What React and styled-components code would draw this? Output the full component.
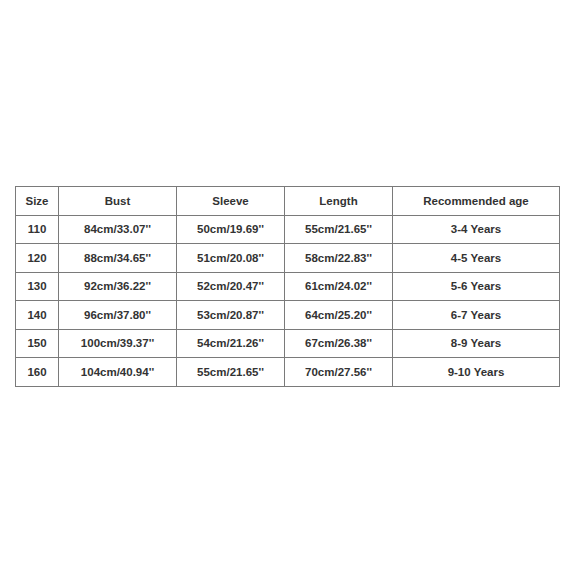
import React from "react";
import styled, { createGlobalStyle } from "styled-components";

const Global = createGlobalStyle`
  html, body { margin: 0; padding: 0; background: #fff; }
  body { font-family: "Liberation Sans", Arial, sans-serif; }
`;

const Page = styled.div`
  width: 573px;
  height: 573px;
  box-sizing: border-box;
  padding: 186px 0 0 15px;
  background: #fff;
`;

const Table = styled.table`
  border-collapse: collapse;
  table-layout: fixed;
  width: 544px;
  color: #333;
  font-size: 11.5px;
  font-weight: bold;
`;

const Cell = styled.td`
  border: 1px solid #7a7a7a;
  height: 27.5px;
  padding: 0;
  text-align: center;
  vertical-align: middle;
  white-space: nowrap;
`;

const cols = [43, 118, 108, 108, 167];
const header = ["Size", "Bust", "Sleeve", "Length", "Recommended age"];
const rows = [
  ["110", "84cm/33.07''", "50cm/19.69''", "55cm/21.65''", "3-4 Years"],
  ["120", "88cm/34.65''", "51cm/20.08''", "58cm/22.83''", "4-5 Years"],
  ["130", "92cm/36.22''", "52cm/20.47''", "61cm/24.02''", "5-6 Years"],
  ["140", "96cm/37.80''", "53cm/20.87''", "64cm/25.20''", "6-7 Years"],
  ["150", "100cm/39.37''", "54cm/21.26''", "67cm/26.38''", "8-9 Years"],
  ["160", "104cm/40.94''", "55cm/21.65''", "70cm/27.56''", "9-10 Years"],
];

export default function App() {
  return (
    <>
      <Global />
      <Page>
        <Table>
          <colgroup>
            {cols.map((w, i) => (
              <col key={i} style={{ width: w }} />
            ))}
          </colgroup>
          <tbody>
            <tr>
              {header.map((h) => (
                <Cell key={h}>{h}</Cell>
              ))}
            </tr>
            {rows.map((r) => (
              <tr key={r[0]}>
                {r.map((c, i) => (
                  <Cell key={i}>{c}</Cell>
                ))}
              </tr>
            ))}
          </tbody>
        </Table>
      </Page>
    </>
  );
}
